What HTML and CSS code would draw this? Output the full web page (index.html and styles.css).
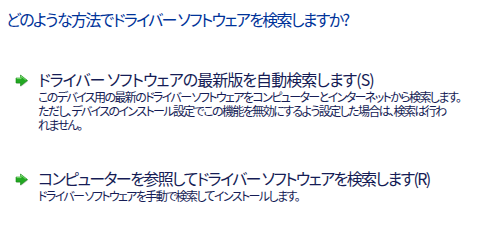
FILE: index.html
```html
<!DOCTYPE html>
<html lang="ja">
<head>
<meta charset="utf-8">
<link rel="stylesheet" href="styles.css">
</head>
<body>
<div class="page">
  <h1 class="title">どのような方法でドライバー ソフトウェアを検索しますか?</h1>
  <div class="links">
    <div class="link">
      <span class="icon">
        <svg width="14" height="13" viewBox="0 0 14 13">
          <path d="M1 4 H5.5 V1 L12.5 6.5 L5.5 12 V9 H1 Z" fill="#cfcfcf" transform="translate(0.7 0.7)"/>
          <path d="M1 4 H5.5 V1 L12.5 6.5 L5.5 12 V9 H1 Z" fill="#22a822" stroke="#168a16" stroke-width="0.6"/>
          <path d="M1.6 4.6 H6.1 V2.2 L10.8 6" fill="none" stroke="#86e07a" stroke-width="0.9"/>
        </svg>
      </span>
      <div class="text">
        <div class="head head-one">ドライバー ソフトウェアの最新版を自動検索します(S)</div>
        <div class="desc">
          <div class="line">このデバイス用の最新のドライバー ソフトウェアをコンピューターとインターネットから検索します。</div>
          <div class="line">ただし、デバイスのインストール設定でこの機能を無効にするよう設定した場合は、検索は行わ</div>
          <div class="line">れません。</div>
        </div>
      </div>
    </div>
    <div class="link">
      <span class="icon">
        <svg width="14" height="13" viewBox="0 0 14 13">
          <path d="M1 4 H5.5 V1 L12.5 6.5 L5.5 12 V9 H1 Z" fill="#cfcfcf" transform="translate(0.7 0.7)"/>
          <path d="M1 4 H5.5 V1 L12.5 6.5 L5.5 12 V9 H1 Z" fill="#22a822" stroke="#168a16" stroke-width="0.6"/>
          <path d="M1.6 4.6 H6.1 V2.2 L10.8 6" fill="none" stroke="#86e07a" stroke-width="0.9"/>
        </svg>
      </span>
      <div class="text">
        <div class="head head-two">コンピューターを参照してドライバー ソフトウェアを検索します(R)</div>
        <div class="desc">
          <div class="line">ドライバー ソフトウェアを手動で検索してインストールします。</div>
        </div>
      </div>
    </div>
  </div>
</div>
</body>
</html>
```

FILE: styles.css
```css
html, body {
  margin: 0;
  padding: 0;
  background: #ffffff;
}
body {
  font-family: "Noto Sans CJK JP", "Noto Sans", sans-serif;
  font-feature-settings: "palt" 1;
}
.page {
  padding: 9px 0 0 6px;
}
.title {
  margin: 0;
  font-size: 16px;
  font-weight: normal;
  line-height: 20px;
  color: #003399;
  white-space: nowrap;
  letter-spacing: -1.65px;
}
.links {
  display: flex;
  flex-direction: column;
  gap: 36px;
  margin-top: 40px;
  padding-left: 9px;
}
.link {
  display: flex;
  align-items: flex-start;
  gap: 9px;
}
.icon {
  display: flex;
  width: 14px;
  padding-top: 5px;
}
.head {
  font-size: 16px;
  line-height: 20px;
  color: #151c55;
  white-space: nowrap;
}
.head-one {
  letter-spacing: -0.95px;
}
.head-two {
  letter-spacing: -1.6px;
}
.desc {
  font-size: 12px;
  line-height: 14px;
  color: #151c55;
  margin-top: 1px;
  white-space: nowrap;
  letter-spacing: -1.6px;
}
```
